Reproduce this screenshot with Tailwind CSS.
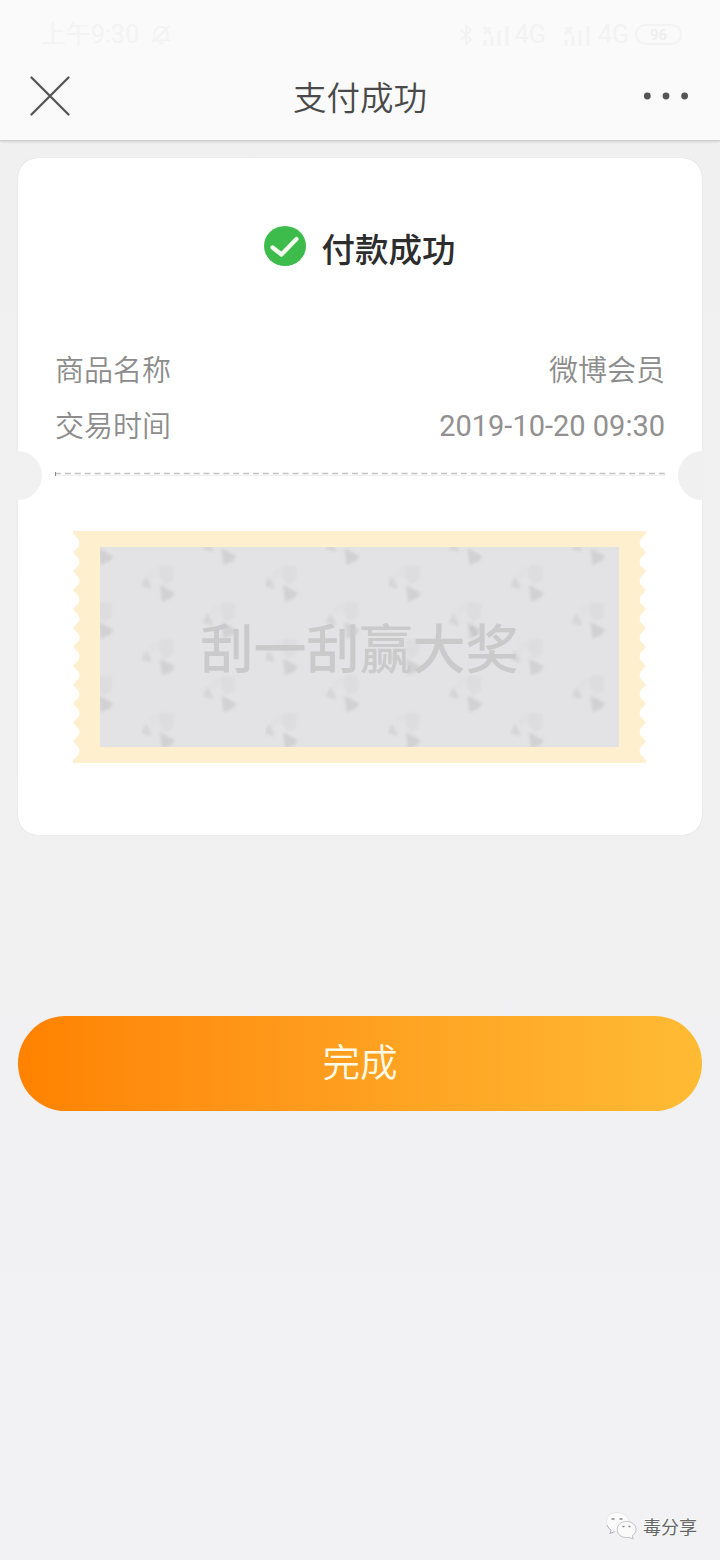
<!DOCTYPE html>
<html lang="zh-CN">
<head>
<meta charset="UTF-8">
<title>支付成功</title>
<script src="https://cdn.jsdelivr.net/npm/@tailwindcss/browser@4"></script>
</head>
<body class="w-[720px] h-[1560px] overflow-hidden bg-[#f1f1f2] font-[Roboto,'Noto_Sans_CJK_SC',sans-serif]">
<div class="flex h-[1560px] flex-col bg-linear-to-b from-[#f0f0f0] to-[#f2f1f3]">
  <header class="h-[141px] shrink-0 border-b border-[#d0d0d0] bg-[#fafafa] shadow-[0_1px_2px_rgba(0,0,0,0.12)]">
    <!-- status bar -->
    <div class="flex h-[52px] items-center justify-between pt-[17px] pl-[41px] pr-[38px] text-[#f3f3f3]">
      <div class="flex items-center gap-[11px]">
        <span class="text-[25px] leading-[32px]">上午9:30</span>
        <svg width="22" height="22" viewBox="0 0 22 24" fill="none" stroke="currentColor" stroke-width="2"><path d="M4 18V10a7 7 0 0 1 14 0v8M1 18h20M8 21h6M2 20L20 2"/></svg>
      </div>
      <div class="flex items-center gap-[5px] text-[25px] leading-[32px]">
        <svg width="14" height="22" viewBox="0 0 14 22" fill="none" stroke="currentColor" stroke-width="2"><path d="M2 6l10 10-5 4V2l5 4L2 16"/></svg>
        <svg class="ml-1" width="28" height="22" viewBox="0 0 28 22" fill="none" stroke="currentColor" stroke-width="3"><path d="M3 22v-6M10 22V12M17 22V7M25 22V2M2 3l7 7M9 3l-7 7"/></svg>
        <span>4G</span>
        <svg class="ml-[12px]" width="28" height="22" viewBox="0 0 28 22" fill="none" stroke="currentColor" stroke-width="3"><path d="M3 22v-6M10 22V12M17 22V7M25 22V2M2 3l7 7M9 3l-7 7"/></svg>
        <span class="ml-[2px] mr-px">4G</span>
        <span class="flex h-[21px] w-[47px] items-center justify-center rounded-full border-2 border-[#f3f3f3] text-[15px] font-medium text-[#eeeeee]">96</span>
      </div>
    </div>
    <!-- title bar -->
    <div class="grid h-[88px] grid-cols-3 items-center px-[30px]">
      <svg width="40" height="40" viewBox="0 0 40 40" fill="none" stroke="#555" stroke-width="2.3" stroke-linecap="round"><path d="M1.500 1.500L38.500 38.500M38.500 1.500L1.500 38.500"/></svg>
      <h1 class="pt-[5px] text-center text-[33.5px] leading-[44px] font-[350] whitespace-nowrap text-[#4a4a4a]">支付成功</h1>
      <svg class="justify-self-end" width="48" height="8" viewBox="0 0 48 8" fill="#555"><circle cx="5.300" cy="4" r="3.400"/><circle cx="24" cy="4" r="3.400"/><circle cx="42.600" cy="4" r="3.400"/></svg>
    </div>
  </header>

  <main class="px-[18px] pt-[17px]">
    <section class="relative h-[677px] rounded-[20px] bg-white px-[37px] pt-[66px] shadow-[0_0_1px_rgba(0,0,0,0.18)]">
      <div class="flex h-[48px] items-center justify-center gap-[16px] pr-px">
        <svg class="mb-[4px]" width="42" height="40" viewBox="0 0 42 40"><ellipse cx="21" cy="20" rx="21" ry="20" fill="#3dbc4c"/><path d="M8.500 21.500l9 7L32.500 13" fill="none" stroke="#f4fff0" stroke-width="4.200" stroke-linecap="round" stroke-linejoin="round"/></svg>
        <h2 class="pt-[5px] text-[33.5px] leading-[44px] font-medium text-[#2d2d2d]">付款成功</h2>
      </div>
      <dl class="mt-[70px] text-[29px] font-[350] text-[#8c8c8c]">
        <div class="flex h-[56px] items-center justify-between pt-[4px]"><dt>商品名称</dt><dd>微博会员</dd></div>
        <div class="flex h-[56px] items-center justify-between pt-[4px]"><dt>交易时间</dt><dd class="pb-[2px] font-normal text-[#929090]">2019-10-20 09:30</dd></div>
      </dl>
      <span class="absolute -left-px top-[293px] h-[49px] w-[25px] rounded-r-full bg-[#f1f1f1]"></span>
      <span class="absolute -right-px top-[293px] h-[49px] w-[25px] rounded-l-full bg-[#f1f0f1]"></span>
      <svg class="mt-[18px] block" width="611" height="4" viewBox="0 0 611 4"><path d="M0 3.300H611" stroke="#ededed"/><path d="M0 1.500H611" stroke="#c4c4c4" stroke-width="1.600" stroke-dasharray="6 3.900"/><path d="M.5 0V4" stroke="#888"/></svg>

      <!-- scratch ticket -->
      <div class="ml-[18px] mt-[55px] grid h-[232px] w-[573px]">
        <svg class="col-start-1 row-start-1" width="573" height="232" viewBox="0 0 573 232">
          <defs>
            <pattern id="edge" width="573" height="18.900" y="2.500" patternUnits="userSpaceOnUse">
              <path d="M0 0L3.500 4Q6.500 6 6.500 9.450T3.500 15L0 18.900Z" fill="#fff"/>
              <path d="M573 0L569.500 4Q566.500 6 566.500 9.450T569.500 15L573 18.900Z" fill="#fff"/>
            </pattern>
            <filter id="soft"><feGaussianBlur stdDeviation="1.400"/></filter>
            <g id="flower" filter="url(#soft)">
              <path d="M5 13L0 23L10 26Q11 22 8 19Z" fill="#d3d3d5" opacity=".85"/>
              <path d="M7 11Q13 2 22 3L20 10Q14 12 10 18Z" fill="#dfdfe1" opacity=".6"/>
              <path d="M20 2L33 3L32 18L24 22L18 14Z" fill="#d9d9db" opacity=".6"/>
              <path d="M19 22L34 30L30 35L21 39Z" fill="#cfcfd1" opacity=".9"/>
            </g>
            <pattern id="flowers" x="68" y="32" width="123" height="73.600" patternUnits="userSpaceOnUse">
              <use href="#flower"/>
              <use href="#flower" x="61.500" y="36.800"/>
              <use href="#flower" x="61.500" y="-36.800"/>
            </pattern>
          </defs>
          <path d="M0 0H573V232H0Z" fill="#fef0cf"/>
          <path d="M0 2.500H573V229.300H0Z" fill="url(#edge)"/>
          <path d="M27 16H546V216H27Z" fill="#e3e3e5"/>
          <path d="M27 16H546V216H27Z" fill="url(#flowers)"/>
        </svg>
        <p class="col-start-1 row-start-1 self-center pt-[7px] text-center text-[53px] leading-[60px] font-medium text-[#cacacb]">刮一刮赢大奖</p>
      </div>
    </section>

    <button class="mt-[181px] block h-[95px] w-full rounded-full bg-linear-to-r from-[#ff8200] to-[#ffbb33] pb-[2px] text-[37.5px] leading-[50px] font-[350] text-[#fffbe8]">完成</button>
  </main>

  <footer class="mt-auto flex h-[66px] items-center justify-end gap-[5px] pr-[23px]">
    <svg class="mb-[2px]" width="32" height="28" viewBox="0 0 32 28" fill="#fbfbfb" stroke="#aaa" stroke-width=".7">
      <path d="M11 .5C4.500.5.500 4.700.500 10c0 3.500 1.800 6.200 4.600 8L4 21.500l4.600-1.800c8 1.800 14.400-3.200 14.400-9.700C23 4.700 17.500.5 11 .5Z" stroke="#e2e2e2"/>
      <path d="M1 13q1.500 4 4.100 5L4 21.500l4.600-1.800" fill="none" stroke="#999"/>
      <path d="M20.500 9.500c-5.500 0-9.300 3.500-9.300 8 0 5.400 5.300 9 11.500 7.800l4.500 1.700-1-3.400c2.400-1.400 3.800-3.800 3.800-6.100 0-4.500-4-8-9.500-8Z"/>
      <path d="M5.500 7h3M13.500 7h3M16.500 14.500h2M22.500 14.500h2" stroke="#888" stroke-width="1.300"/>
    </svg>
    <span class="pt-[2px] text-[18px] leading-[26px] text-[#666] [text-shadow:-1px_-1px_0_#fff]">毒分享</span>
  </footer>
</div>
</body>
</html>
